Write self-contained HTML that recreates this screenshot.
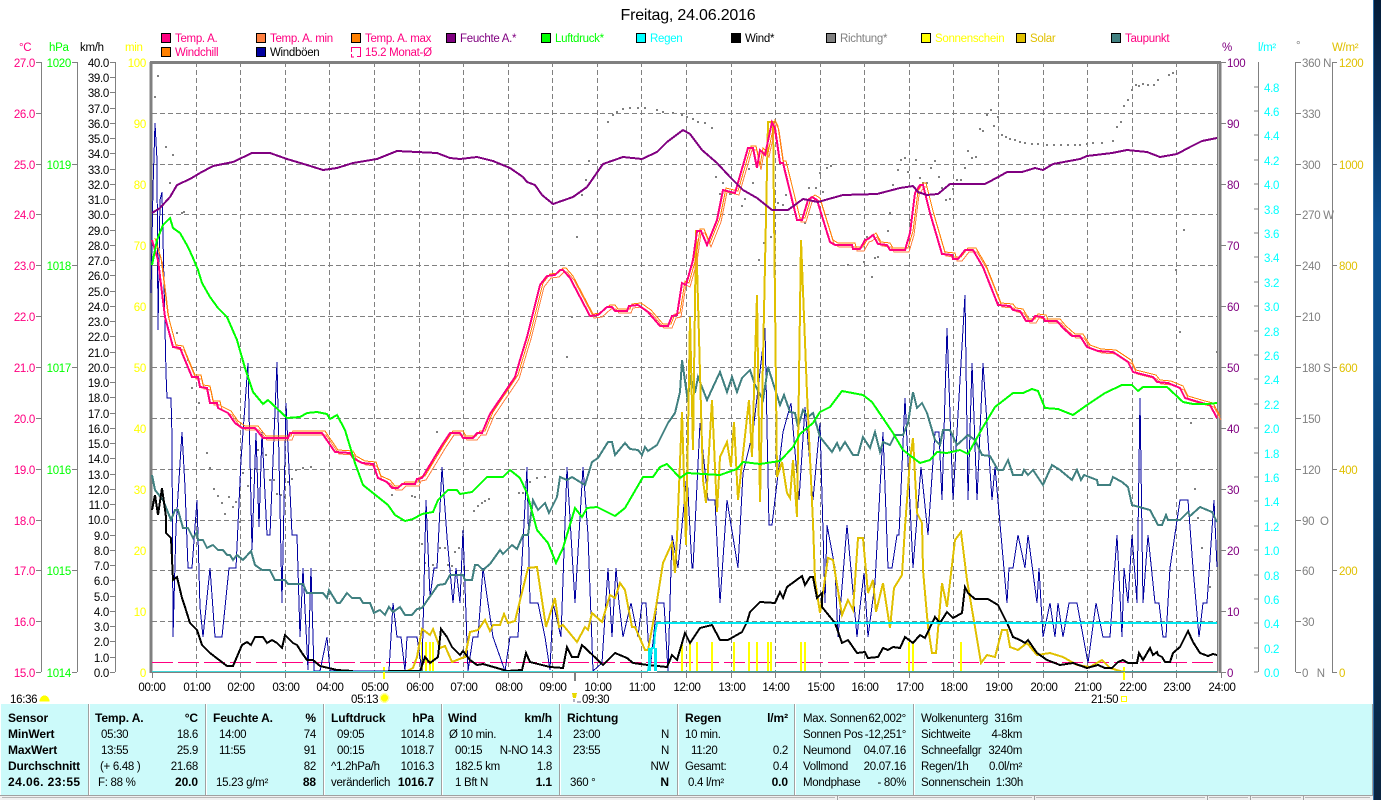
<!DOCTYPE html>
<html><head><meta charset="utf-8"><title>Freitag, 24.06.2016</title>
<style>
html,body{margin:0;padding:0;background:#fff;width:1381px;height:800px;overflow:hidden}
svg{display:block;position:absolute;left:0;top:0}
text{font-family:"Liberation Sans",sans-serif;font-size:11.5px;letter-spacing:-.3px}
.e{text-anchor:end}.m{text-anchor:middle}
.b{font-weight:bold;font-size:12px;letter-spacing:-.1px}
.c{fill:#ff0080}.g{fill:#00ff00}.y{fill:#ffff00}.p{fill:#800080}.t{fill:#00ffff}.k{fill:#808080}.s{fill:#e0c000}
.l{fill:none;stroke-linejoin:miter}
</style></head><body>
<svg width="1381" height="800" viewBox="0 0 1381 800" shape-rendering="crispEdges" xmlns="http://www.w3.org/2000/svg">
<defs>
<linearGradient id="bg" x1="0" y1="0" x2="0" y2="1"><stop offset="0" stop-color="#041c38"/><stop offset=".13" stop-color="#07305c"/><stop offset=".28" stop-color="#0a4f90"/><stop offset=".45" stop-color="#0a4c88"/><stop offset=".7" stop-color="#08365f"/><stop offset="1" stop-color="#0a2440"/></linearGradient>
<polyline id="temp" class="l" points="152,240 158,260 165,317 173,347 180,348 192,377 198,377 200,387 207,388 210,403 217,403 218,408 228,413 235,423 242,428 255,428 263,438 288,438 290,433 322,433 335,452 350,453 353,458 362,463 373,464 378,478 387,482 392,488 398,488 402,484 415,484 417,479 422,478 442,445 450,433 460,433 463,438 473,438 477,433 482,433 490,414 515,377 520,360 527,337 540,285 547,276 555,275 560,270 563,270 570,278 580,297 590,316 598,315 607,307 612,307 615,311 627,311 629,306 638,305 648,312 660,326 668,326 672,316 677,315 682,283 686,285 693,260 697,231 701,231 707,245 717,220 723,190 735,193 748,148 753,148 757,168 760,150 765,155 772,122 775,128 780,163 783,163 797,220 802,220 808,200 812,197 817,200 830,242 835,245 852,245 853,249 860,249 865,240 868,239 873,235 878,244 887,245 890,250 905,250 910,233 915,193 920,185 923,185 930,213 942,254 952,255 953,259 958,259 965,250 973,250 983,267 998,305 1010,306 1013,310 1020,311 1026,321 1032,321 1035,316 1043,317 1045,321 1057,321 1063,328 1072,336 1080,336 1087,347 1098,351 1113,352 1122,358 1128,362 1133,372 1153,377 1157,382 1168,383 1180,388 1185,398 1202,403 1210,405 1217,418"/>
</defs>
<rect x="1373" y="0" width="8" height="800" fill="url(#bg)"/>
<rect x="1373" y="0" width="1" height="800" fill="#2d6ea8"/>
<!-- grid -->
<path d="M196 62V672M240 62V672M285 62V672M329 62V672M374 62V672M419 62V672M463 62V672M508 62V672M552 62V672M597 62V672M641 62V672M686 62V672M731 62V672M775 62V672M820 62V672M864 62V672M909 62V672M953 62V672M998 62V672M1043 62V672M1087 62V672M1132 62V672M1176 62V672" stroke="#808080" stroke-width="1" stroke-dasharray="5 3" fill="none" transform="translate(.5 0)"/>
<path d="M152 113.500H1217M152 164.500H1217M152 214.500H1217M152 265.500H1217M152 316.500H1217M152 367.500H1217M152 418.500H1217M152 469.500H1217M152 520.500H1217M152 570.500H1217M152 621.500H1217" stroke="#808080" stroke-width="1" stroke-dasharray="5 3" fill="none"/>
<!-- frame -->
<path d="M150 62.500H1221M151 62V673M1220 62V673" stroke="#808080" stroke-width="3" fill="none"/>
<path d="M1217.500 63V672" stroke="#808080" stroke-width="1" fill="none"/>
<path d="M152 672.500H1218" stroke="#808080" stroke-width="1" fill="none"/>
<!-- axes -->
<path d="M41.500 62V672M77.500 62V672M115.500 62V672M1258.500 62V672M1295.500 62V672M1332.500 62V672" stroke="#808080" stroke-width="1" fill="none"/>
<path d="M36 62.500H41M36 113.500H41M36 164.500H41M36 214.500H41M36 265.500H41M36 316.500H41M36 367.500H41M36 418.500H41M36 469.500H41M36 520.500H41M36 570.500H41M36 621.500H41M36 672.500H41M72 62.500H77M72 164.500H77M72 265.500H77M72 367.500H77M72 469.500H77M72 570.500H77M72 672.500H77M110 62.500H115M110 77.500H115M110 92.500H115M110 108.500H115M110 123.500H115M110 138.500H115M110 153.500H115M110 169.500H115M110 184.500H115M110 199.500H115M110 214.500H115M110 230.500H115M110 245.500H115M110 260.500H115M110 275.500H115M110 291.500H115M110 306.500H115M110 321.500H115M110 336.500H115M110 352.500H115M110 367.500H115M110 382.500H115M110 397.500H115M110 413.500H115M110 428.500H115M110 443.500H115M110 458.500H115M110 474.500H115M110 489.500H115M110 504.500H115M110 519.500H115M110 535.500H115M110 550.500H115M110 565.500H115M110 580.500H115M110 596.500H115M110 611.500H115M110 626.500H115M110 641.500H115M110 657.500H115M110 672.500H115M1221 62.500H1226M1221 123.500H1226M1221 184.500H1226M1221 245.500H1226M1221 306.500H1226M1221 367.500H1226M1221 428.500H1226M1221 489.500H1226M1221 550.500H1226M1221 611.500H1226M1221 672.500H1226M1254 87H1258M1254 111H1258M1254 135H1258M1254 160H1258M1254 184H1258M1254 209H1258M1254 233H1258M1254 257H1258M1254 282H1258M1254 306H1258M1254 331H1258M1254 355H1258M1254 379H1258M1254 404H1258M1254 428H1258M1254 453H1258M1254 477H1258M1254 501H1258M1254 526H1258M1254 550H1258M1254 575H1258M1254 599H1258M1254 623H1258M1254 648H1258M1254 672H1258M1296 62.500H1301M1296 113.500H1301M1296 164.500H1301M1296 214.500H1301M1296 265.500H1301M1296 316.500H1301M1296 367.500H1301M1296 418.500H1301M1296 469.500H1301M1296 520.500H1301M1296 570.500H1301M1296 621.500H1301M1296 672.500H1301M1332 62.500H1337M1332 164.500H1337M1332 265.500H1337M1332 367.500H1337M1332 469.500H1337M1332 570.500H1337M1332 672.500H1337M152.500 672V678M196.500 672V678M240.500 672V678M285.500 672V678M329.500 672V678M374.500 672V678M419.500 672V678M463.500 672V678M508.500 672V678M552.500 672V678M597.500 672V678M641.500 672V678M686.500 672V678M731.500 672V678M775.500 672V678M820.500 672V678M864.500 672V678M909.500 672V678M953.500 672V678M998.500 672V678M1043.500 672V678M1087.500 672V678M1132.500 672V678M1176.500 672V678M1221.500 672V678" stroke="#808080" stroke-width="1" fill="none"/>
<!-- direction dots -->
<path stroke="#808080" stroke-width="2" fill="none" d="M157 76h2M154 97h2M165 147h2M172 155h2M169 183h2M183 212h2M181 213h2M161 263h2M176 333h2M187 360h2M191 388h2M198 403h2M206 453h2M209 468h2M213 489h2M217 496h2M221 503h2M224 514h2M228 497h2M232 507h2M235 502h2M239 522h2M242 473h2M247 486h2M250 478h2M254 469h2M257 450h2M261 453h2M265 455h2M269 480h2M273 480h2M276 494h2M280 495h2M284 497h2M287 482h2M291 479h2M295 470h2M302 468h2M310 467h2M391 495h2M411 496h2M414 497h2M436 432h2M421 544h2M424 563h2M432 565h2M439 548h2M444 548h2M447 565h2M451 566h2M454 552h2M458 548h2M462 532h2M473 511h2M477 506h2M481 503h2M484 501h2M488 499h2M518 493h2M522 493h2M526 482h2M529 482h2M536 478h2M544 477h2M566 357h2M571 317h2M576 237h2M581 195h2M585 180h2M588 161h2M607 122h2M612 115h2M616 112h2M622 109h2M629 108h2M637 108h2M644 108h2M656 110h2M662 112h2M672 113h2M681 115h2M686 117h2M692 119h2M697 122h2M704 123h2M711 128h2M715 177h2M722 183h2M719 194h2M729 194h2M744 199h2M741 206h2M752 183h2M748 169h2M763 243h2M758 260h2M770 237h2M777 203h2M782 205h2M785 195h2M804 223h2M808 188h2M815 188h2M822 192h2M819 173h2M826 168h2M830 166h2M847 265h2M863 262h2M874 258h2M877 257h2M866 237h2M887 231h2M889 213h2M892 185h2M897 170h2M900 160h2M904 158h2M907 172h2M915 160h2M909 220h2M917 193h2M919 178h2M922 183h2M926 183h2M930 168h2M934 161h2M938 177h2M941 188h2M945 200h2M949 199h2M952 189h2M956 180h2M960 180h2M964 168h2M967 151h2M971 158h2M975 157h2M979 129h2M982 131h2M986 115h2M990 110h2M993 126h2M997 117h2M1001 135h2M1005 137h2M1009 139h2M1014 140h2M1019 142h2M1024 143h2M1031 144h2M1037 144h2M1046 145h2M1053 145h2M1060 145h2M1067 145h2M1074 145h2M1079 145h2M1086 144h2M1092 143h2M1101 143h2M1112 141h2M1116 127h2M1120 122h2M1123 106h2M1127 100h2M1131 90h2M1135 85h2M1138 86h2M1142 84h2M1147 85h2M1153 85h2M1157 80h2M1168 75h2M1172 73h2M1183 230h2M871 277h2M1179 332h2M1190 423h2M1194 489h2M1197 518h2M1201 548h2M1209 587h2M1216 352h2M1175 270h2"/>
<!-- dashed monat -->
<path d="M152 662.500H1217" stroke="#ff0080" stroke-width="1" stroke-dasharray="21 5" fill="none"/>
<!-- sunshine bars -->
<path stroke="#ffff00" stroke-width="2" fill="none" d="M422 642V672M426 642V672M430 642V672M433 642V672M682 642V672M690 642V672M697 642V672M712 642V672M734 642V672M749 642V672M757 642V672M768 642V672M771 642V672M801 642V672M805 642V672M909 642V672M913 642V672M961 642V672"/>
<path stroke="#ffff00" stroke-width="2" fill="none" d="M384 667V679M1124 667V680"/>
<path stroke="#808080" stroke-width="2" fill="none" d="M575 672V681"/>
<!-- gusts -->
<polyline class="l" stroke="#0000a0" stroke-width="1" points="151,293 153,188 155,123 157,160 158,330 160,200 162,192 166,373 167,398 171,398 172,437 173,637 176,527 182,432 185,487 188,568 192,568 197,500 200,607 203,637 210,568 215,637 222,637 229,568 236,568 241,460 248,363 252,550 256,433 259,527 262,432 267,535 270,535 277,362 282,603 286,403 292,535 297,535 300,637 303,568 308,670 311,568 314,671 320,671 327,637 330,671 389,671 393,603 397,637 401,637 405,671 407,637 417,637 422,671 426,500 430,597 434,568 437,568 442,467 447,537 453,603 456,568 460,603 463,530 468,671 473,637 478,637 483,568 488,603 493,637 505,671 510,637 518,637 527,467 530,603 538,603 545,637 550,670 553,603 561,637 567,467 575,603 583,467 588,535 593,671 602,663 608,568 612,637 616,568 619,603 623,637 631,603 638,637 642,603 646,603 650,671 657,603 664,603 668,671 672,535 678,568 687,473 692,568 693,568 700,423 708,500 715,500 720,603 727,500 738,568 743,473 753,432 765,328 769,525 772,525 783,432 791,403 799,500 805,407 813,500 820,423 825,603 827,525 835,568 838,637 847,525 857,637 860,607 864,573 868,637 875,583 883,432 888,568 892,568 897,535 899,535 905,398 913,568 921,467 928,535 935,432 939,432 942,500 947,328 953,500 965,295 968,500 972,363 977,500 983,363 992,500 995,467 1007,603 1009,568 1013,568 1018,535 1025,568 1028,535 1037,603 1039,568 1043,637 1050,603 1055,637 1058,603 1063,637 1069,603 1077,603 1088,663 1096,603 1103,637 1110,637 1117,535 1122,637 1124,568 1128,603 1132,535 1137,603 1140,398 1143,603 1148,535 1155,603 1159,603 1163,637 1166,637 1170,568 1180,500 1188,500 1193,568 1199,637 1203,603 1207,603 1214,500 1217,567"/>
<!-- taupunkt -->
<polyline class="l" stroke="#408080" stroke-width="2" points="152,475 155,490 163,500 171,520 175,510 178,510 183,528 188,528 193,538 197,532 198,540 203,540 207,548 213,545 218,550 223,550 227,555 230,555 233,560 237,555 243,560 251,551 255,565 262,570 270,570 275,580 285,580 288,584 303,584 307,593 323,593 327,598 329,590 337,603 340,603 347,593 352,598 360,598 363,603 370,603 374,613 380,610 385,615 389,607 393,612 400,607 405,615 412,615 417,609 422,608 438,585 445,584 450,575 463,575 465,580 472,580 475,565 478,565 483,570 490,564 500,550 503,554 512,545 517,549 523,535 528,535 533,500 538,510 545,503 549,513 557,497 560,477 567,480 572,477 580,482 585,485 592,462 598,458 608,442 612,442 615,455 625,443 630,449 638,450 642,455 645,447 648,451 657,445 668,423 675,413 680,392 682,360 688,402 690,375 695,393 698,377 707,400 713,387 720,372 727,392 732,377 737,392 742,378 750,370 755,385 763,400 768,367 780,405 784,395 790,412 795,413 798,427 803,410 808,417 813,413 820,437 832,452 837,443 840,450 845,442 853,455 858,455 863,437 870,448 875,432 880,452 883,442 890,445 895,435 903,435 908,423 913,392 917,408 922,403 927,413 935,440 940,445 943,430 950,430 957,445 968,435 975,440 982,455 990,456 998,470 1003,470 1008,460 1013,475 1022,475 1024,470 1028,475 1033,470 1043,485 1052,465 1060,470 1072,480 1077,470 1081,480 1084,475 1097,480 1098,485 1110,485 1113,477 1122,482 1128,487 1132,505 1150,510 1158,525 1162,525 1166,515 1168,520 1180,520 1188,512 1190,516 1200,507 1212,512 1217,522"/>
<!-- solar -->
<polyline class="l" stroke="#e0c000" stroke-width="2" points="407,671 413,668 417,657 422,629 430,635 433,629 440,648 445,646 452,662 462,658 465,657 470,632 478,630 485,620 490,631 493,625 500,625 504,614 508,623 515,621 528,568 537,567 543,607 546,627 555,598 559,627 563,625 577,642 585,627 588,630 592,613 602,622 610,595 615,598 620,583 625,590 632,627 635,627 645,650 648,650 656,607 663,563 672,543 675,573 677,537 682,412 686,545 690,317 693,450 696,230 703,480 706,503 712,400 717,512 720,457 727,442 731,467 734,422 738,500 742,463 749,400 752,457 757,295 760,502 768,122 773,122 777,477 782,462 787,493 790,498 793,460 797,517 801,240 807,393 813,523 815,580 820,613 828,558 833,560 842,615 848,600 853,610 858,538 863,538 865,560 868,593 873,580 876,612 883,583 890,628 894,588 902,575 905,527 910,460 913,438 917,513 922,523 923,570 928,627 932,653 936,653 942,583 947,607 955,540 961,532 967,580 975,627 981,663 987,655 995,657 1002,630 1007,630 1010,647 1018,650 1027,643 1037,655 1050,653 1063,657 1077,665 1090,667 1102,660 1110,668 1120,671 1124,672"/>
<!-- temp lines -->
<use href="#temp" stroke="#ff8040" stroke-width="1" transform="translate(4 2)"/>
<use href="#temp" stroke="#ff8000" stroke-width="1" transform="translate(3 -2)"/>
<use href="#temp" stroke="#ff0080" stroke-width="2"/>
<!-- green, humidity -->
<polyline class="l" stroke="#00ff00" stroke-width="2" points="152,265 157,240 163,225 170,218 173,228 180,233 188,247 193,258 198,270 202,283 210,297 218,308 227,317 237,340 245,368 253,392 263,404 268,400 287,418 300,417 307,413 317,412 327,414 330,419 337,415 345,430 355,463 363,485 388,505 395,515 405,521 413,519 422,514 433,512 438,500 448,490 457,490 460,494 472,492 487,477 503,477 510,470 520,478 527,493 537,530 548,543 556,563 563,548 575,508 582,517 587,508 597,507 615,516 625,508 643,477 653,477 660,467 667,464 680,478 687,473 720,475 737,469 743,462 760,464 780,461 793,447 800,434 813,423 820,412 830,407 842,391 863,395 872,402 893,433 903,450 920,463 930,460 937,452 947,453 960,450 968,454 983,427 995,407 1013,393 1023,393 1032,389 1038,391 1045,408 1058,409 1073,415 1087,405 1105,393 1122,385 1132,385 1138,391 1143,387 1167,387 1183,402 1193,404 1207,404 1217,403"/>
<polyline class="l" stroke="#800080" stroke-width="2" points="152,213 160,208 170,197 177,185 190,179 200,173 213,166 233,162 252,153 270,153 287,159 307,165 323,170 337,168 353,163 377,159 397,151 437,153 450,158 460,159 477,157 493,161 510,168 523,177 527,182 535,185 542,195 553,204 573,197 587,187 603,164 623,157 642,159 657,152 667,142 683,130 690,134 702,150 717,163 730,177 743,190 757,198 772,210 788,210 803,199 818,202 843,195 877,194 900,188 913,186 918,192 927,195 938,194 950,184 985,184 1000,176 1007,172 1022,172 1035,168 1043,170 1053,164 1080,159 1087,156 1112,153 1127,150 1147,152 1160,157 1177,154 1190,147 1202,141 1217,138"/>
<!-- wind -->
<polyline class="l" stroke="#000" stroke-width="2" points="152,510 155,495 158,515 162,488 166,517 166,533 171,538 173,580 177,577 182,598 185,607 190,623 197,630 202,645 210,653 227,666 233,666 242,645 247,642 251,645 255,637 263,637 267,643 272,640 277,643 282,648 285,635 293,643 297,645 302,653 307,660 313,660 320,666 337,670 353,671"/>
<polyline class="l" stroke="#000" stroke-width="2" points="388,671 420,671 425,657 430,663 438,657 441,629 447,637 452,647 460,655 463,651 470,660 477,665 483,664 497,668 507,671 522,670 526,653 530,662 550,667 563,668 567,647 572,657 578,657 582,645 603,665 615,653 627,658 633,663 648,665 667,667 672,655 677,660 685,633 690,643 700,628 712,625 720,640 728,640 742,632 747,622 750,612 760,602 775,603 780,592 783,598 787,587 802,576 805,585 810,577 813,577 817,598 822,593 822,607 835,623 842,643 848,640 857,653 865,652 868,658 878,657 883,648 888,650 893,647 900,648 905,637 913,643 920,635 925,638 935,617 940,623 947,612 953,618 962,613 965,587 968,593 975,599 988,599 998,605 1008,625 1013,637 1020,640 1025,643 1028,640 1037,653 1047,660 1060,665 1073,663 1087,668 1098,665 1105,668 1112,668 1118,662 1123,660 1128,663 1137,663 1139,653 1143,660 1150,648 1153,655 1157,652 1158,655 1162,657 1165,662 1170,662 1173,653 1180,647 1188,631 1193,642 1200,653 1208,656 1213,654 1217,655"/>
<!-- rain -->
<path d="M152 671.500H648" stroke="#40d8d8" stroke-width="1" fill="none"/>
<polyline class="l" stroke="#00e8f0" stroke-width="2" points="648,671 652,648 654,648 655,633 657,623 1217,623"/>
<path d="M649.500 648V671M655.500 648V671" stroke="#00e8f0" stroke-width="3" fill="none"/>
<path d="M657 671.500H1217" stroke="#40a0a0" stroke-width="1" fill="none"/>
<!-- title -->
<text x="688" y="20" class="m" style="font-size:16px;letter-spacing:-.2px">Freitag, 24.06.2016</text>
<!-- legend -->
<g stroke="#000" stroke-width="1">
<rect x="161.500" y="33.500" width="9" height="9" fill="#ff0080"/><rect x="256.500" y="33.500" width="9" height="9" fill="#ff8040"/><rect x="351.500" y="33.500" width="9" height="9" fill="#ff8000"/><rect x="446.500" y="33.500" width="9" height="9" fill="#800080"/><rect x="541.500" y="33.500" width="9" height="9" fill="#00ff00"/><rect x="636.500" y="33.500" width="9" height="9" fill="#00ffff"/><rect x="731.500" y="33.500" width="9" height="9" fill="#000"/><rect x="826.500" y="33.500" width="9" height="9" fill="#808080"/><rect x="921.500" y="33.500" width="9" height="9" fill="#ffff00"/><rect x="1016.500" y="33.500" width="9" height="9" fill="#e0c000"/><rect x="1111.500" y="33.500" width="9" height="9" fill="#408080"/>
<rect x="161.500" y="47.500" width="9" height="9" fill="#ff8000"/><rect x="256.500" y="47.500" width="9" height="9" fill="#0000a0"/>
</g>
<path d="M351.500 52V47.500H360.500V56.500H357M351.500 54V57H354" stroke="#ff0080" fill="none"/>
<text x="175" y="42" class="c">Temp. A.</text><text x="270" y="42" class="c">Temp. A. min</text><text x="365" y="42" class="c">Temp. A. max</text><text x="460" y="42" class="p">Feuchte A.*</text><text x="555" y="42" class="g">Luftdruck*</text><text x="650" y="42" class="t">Regen</text><text x="745" y="42">Wind*</text><text x="840" y="42" class="k">Richtung*</text><text x="935" y="42" class="y">Sonnenschein</text><text x="1030" y="42" class="s">Solar</text><text x="1125" y="42" class="c">Taupunkt</text>
<text x="175" y="56" class="c">Windchill</text><text x="270" y="56">Windböen</text><text x="365" y="56" class="c">15.2 Monat-Ø</text>
<!-- axis titles -->
<text x="19" y="51" class="c">°C</text><text x="49" y="51" class="g">hPa</text><text x="80" y="51">km/h</text><text x="125" y="51" class="y">min</text><text x="1222" y="51" class="p">%</text><text x="1258" y="51" class="t">l/m²</text><text x="1296" y="49" class="k">°</text><text x="1332" y="51" class="s">W/m²</text>
<!-- C axis -->
<g class="c"><text class="e c" x="35" y="67">27.0</text><text class="e c" x="35" y="118">26.0</text><text class="e c" x="35" y="169">25.0</text><text class="e c" x="35" y="219">24.0</text><text class="e c" x="35" y="270">23.0</text><text class="e c" x="35" y="321">22.0</text><text class="e c" x="35" y="372">21.0</text><text class="e c" x="35" y="423">20.0</text><text class="e c" x="35" y="474">19.0</text><text class="e c" x="35" y="525">18.0</text><text class="e c" x="35" y="575">17.0</text><text class="e c" x="35" y="626">16.0</text><text class="e c" x="35" y="677">15.0</text></g>
<text class="e g" x="71" y="67">1020</text><text class="e g" x="71" y="169">1019</text><text class="e g" x="71" y="270">1018</text><text class="e g" x="71" y="372">1017</text><text class="e g" x="71" y="474">1016</text><text class="e g" x="71" y="575">1015</text><text class="e g" x="71" y="677">1014</text>
<text class="e" x="109" y="67">40.0</text><text class="e" x="109" y="82">39.0</text><text class="e" x="109" y="97">38.0</text><text class="e" x="109" y="113">37.0</text><text class="e" x="109" y="128">36.0</text><text class="e" x="109" y="143">35.0</text><text class="e" x="109" y="158">34.0</text><text class="e" x="109" y="174">33.0</text><text class="e" x="109" y="189">32.0</text><text class="e" x="109" y="204">31.0</text><text class="e" x="109" y="219">30.0</text><text class="e" x="109" y="235">29.0</text><text class="e" x="109" y="250">28.0</text><text class="e" x="109" y="265">27.0</text><text class="e" x="109" y="280">26.0</text><text class="e" x="109" y="296">25.0</text><text class="e" x="109" y="311">24.0</text><text class="e" x="109" y="326">23.0</text><text class="e" x="109" y="341">22.0</text><text class="e" x="109" y="357">21.0</text><text class="e" x="109" y="372">20.0</text><text class="e" x="109" y="387">19.0</text><text class="e" x="109" y="402">18.0</text><text class="e" x="109" y="418">17.0</text><text class="e" x="109" y="433">16.0</text><text class="e" x="109" y="448">15.0</text><text class="e" x="109" y="463">14.0</text><text class="e" x="109" y="479">13.0</text><text class="e" x="109" y="494">12.0</text><text class="e" x="109" y="509">11.0</text><text class="e" x="109" y="524">10.0</text><text class="e" x="109" y="540">9.0</text><text class="e" x="109" y="555">8.0</text><text class="e" x="109" y="570">7.0</text><text class="e" x="109" y="585">6.0</text><text class="e" x="109" y="601">5.0</text><text class="e" x="109" y="616">4.0</text><text class="e" x="109" y="631">3.0</text><text class="e" x="109" y="646">2.0</text><text class="e" x="109" y="662">1.0</text><text class="e" x="109" y="677">0.0</text>
<text class="e y" x="146" y="67">100</text><text class="e y" x="146" y="128">90</text><text class="e y" x="146" y="189">80</text><text class="e y" x="146" y="250">70</text><text class="e y" x="146" y="311">60</text><text class="e y" x="146" y="372">50</text><text class="e y" x="146" y="433">40</text><text class="e y" x="146" y="494">30</text><text class="e y" x="146" y="555">20</text><text class="e y" x="146" y="616">10</text><text class="e y" x="146" y="677">0</text>
<text class="p" x="1227" y="67">100</text><text class="p" x="1227" y="128">90</text><text class="p" x="1227" y="189">80</text><text class="p" x="1227" y="250">70</text><text class="p" x="1227" y="311">60</text><text class="p" x="1227" y="372">50</text><text class="p" x="1227" y="433">40</text><text class="p" x="1227" y="494">30</text><text class="p" x="1227" y="555">20</text><text class="p" x="1227" y="616">10</text><text class="p" x="1227" y="677">0</text>
<text class="t" x="1264" y="92">4.8</text><text class="t" x="1264" y="116">4.6</text><text class="t" x="1264" y="140">4.4</text><text class="t" x="1264" y="165">4.2</text><text class="t" x="1264" y="189">4.0</text><text class="t" x="1264" y="214">3.8</text><text class="t" x="1264" y="238">3.6</text><text class="t" x="1264" y="262">3.4</text><text class="t" x="1264" y="287">3.2</text><text class="t" x="1264" y="311">3.0</text><text class="t" x="1264" y="336">2.8</text><text class="t" x="1264" y="360">2.6</text><text class="t" x="1264" y="384">2.4</text><text class="t" x="1264" y="409">2.2</text><text class="t" x="1264" y="433">2.0</text><text class="t" x="1264" y="458">1.8</text><text class="t" x="1264" y="482">1.6</text><text class="t" x="1264" y="506">1.4</text><text class="t" x="1264" y="531">1.2</text><text class="t" x="1264" y="555">1.0</text><text class="t" x="1264" y="580">0.8</text><text class="t" x="1264" y="604">0.6</text><text class="t" x="1264" y="628">0.4</text><text class="t" x="1264" y="653">0.2</text><text class="t" x="1264" y="677">0.0</text>
<text class="k" x="1302" y="67">360 N</text><text class="k" x="1302" y="118">330</text><text class="k" x="1302" y="169">300</text><text class="k" x="1302" y="219">270 W</text><text class="k" x="1302" y="270">240</text><text class="k" x="1302" y="321">210</text><text class="k" x="1302" y="372">180 S</text><text class="k" x="1302" y="423">150</text><text class="k" x="1302" y="474">120</text><text class="k" x="1302" y="525">90 &nbsp;O</text><text class="k" x="1302" y="575">60</text><text class="k" x="1302" y="626">30</text><text class="k" x="1302" y="677">0 &nbsp;&nbsp;N</text>
<text class="s" x="1339" y="67">1200</text><text class="s" x="1339" y="169">1000</text><text class="s" x="1339" y="270">800</text><text class="s" x="1339" y="372">600</text><text class="s" x="1339" y="474">400</text><text class="s" x="1339" y="575">200</text><text class="s" x="1339" y="677">0</text>
<!-- x labels -->
<text class="m" x="152" y="691">00:00</text><text class="m" x="197" y="691">01:00</text><text class="m" x="241" y="691">02:00</text><text class="m" x="286" y="691">03:00</text><text class="m" x="330" y="691">04:00</text><text class="m" x="375" y="691">05:00</text><text class="m" x="420" y="691">06:00</text><text class="m" x="464" y="691">07:00</text><text class="m" x="509" y="691">08:00</text><text class="m" x="553" y="691">09:00</text><text class="m" x="598" y="691">10:00</text><text class="m" x="642" y="691">11:00</text><text class="m" x="687" y="691">12:00</text><text class="m" x="732" y="691">13:00</text><text class="m" x="776" y="691">14:00</text><text class="m" x="821" y="691">15:00</text><text class="m" x="865" y="691">16:00</text><text class="m" x="910" y="691">17:00</text><text class="m" x="954" y="691">18:00</text><text class="m" x="999" y="691">19:00</text><text class="m" x="1044" y="691">20:00</text><text class="m" x="1088" y="691">21:00</text><text class="m" x="1133" y="691">22:00</text><text class="m" x="1177" y="691">23:00</text><text class="m" x="1222" y="691">24:00</text>
<text x="10" y="703">16:36</text><path d="M40 701a4.500 5 0 0 1 9 0z" fill="#ffff00" stroke="#ffff00" stroke-width="1"/>
<text x="351" y="703">05:13</text><circle cx="384.500" cy="698" r="5" fill="#ffffa0"/><circle cx="384.500" cy="698" r="3.500" fill="#ffff00"/>
<text x="582" y="703">09:30</text><path d="M572 693h5l-1 5h-2l-1 0z" fill="#e8d800"/><path d="M574 699v3M577 702h4" stroke="#606080" fill="none"/>
<text x="1091" y="703">21:50</text><rect x="1121.500" y="696.500" width="5" height="5" fill="none" stroke="#ffff00"/>
<!-- panel -->
<rect x="1" y="704" width="1372" height="91" fill="#ccfafa"/>
<rect x="1372" y="704" width="1" height="91" fill="#a0a0a0"/>
<path d="M88.500 704V795M205.500 704V795M323.500 704V795M441.500 704V795M559.500 704V795M677.500 704V795M794.500 704V795M913.500 704V795" stroke="#a0a0a0" stroke-width="1" fill="none"/>
<path d="M89.500 704V795M206.500 704V795M324.500 704V795M442.500 704V795M560.500 704V795M678.500 704V795M795.500 704V795M914.500 704V795" stroke="#fff" stroke-width="1" fill="none"/>
<rect x="0" y="795" width="1373" height="5" fill="#f0f0f0"/>
<rect x="0" y="795" width="1373" height="1" fill="#a0a0a0"/>
<path d="M2 797.500H835M839 797.500H1032M1036 797.500H1205M1209 797.500H1248M1252 797.500H1301M1305 797.500H1370" stroke="#b8b8b8" fill="none"/>
<path d="M837.500 796V800M1034.500 796V800M1207.500 796V800M1250.500 796V800M1303.500 796V800" stroke="#a0a0a0" fill="none"/>
<g>
<text class="b" x="8" y="722">Sensor</text><text class="b" x="8" y="738">MinWert</text><text class="b" x="8" y="754">MaxWert</text><text class="b" x="8" y="770" textLength="72">Durchschnitt</text><text class="b" x="8" y="786" textLength="72">24.06. 23:55</text>
<text class="b" x="95" y="722">Temp. A.</text><text class="b e" x="198" y="722">°C</text>
<text x="101" y="738">05:30</text><text class="e" x="198" y="738">18.6</text><text x="101" y="754">13:55</text><text class="e" x="198" y="754">25.9</text><text x="100" y="770">(+ 6.48 )</text><text class="e" x="198" y="770">21.68</text><text x="98" y="786">F: 88 %</text><text class="b e" x="198" y="786">20.0</text>
<text class="b" x="213" y="722">Feuchte A.</text><text class="b e" x="316" y="722">%</text>
<text x="219" y="738">14:00</text><text class="e" x="316" y="738">74</text><text x="219" y="754">11:55</text><text class="e" x="316" y="754">91</text><text class="e" x="316" y="770">82</text><text x="216" y="786">15.23 g/m²</text><text class="b e" x="316" y="786">88</text>
<text class="b" x="331" y="722">Luftdruck</text><text class="b e" x="434" y="722">hPa</text>
<text x="337" y="738">09:05</text><text class="e" x="434" y="738">1014.8</text><text x="337" y="754">00:15</text><text class="e" x="434" y="754">1018.7</text><text x="331" y="770">^1.2hPa/h</text><text class="e" x="434" y="770">1016.3</text><text x="331" y="786">veränderlich</text><text class="b e" x="434" y="786">1016.7</text>
<text class="b" x="448" y="722">Wind</text><text class="b e" x="552" y="722">km/h</text>
<text x="449" y="738">Ø 10 min.</text><text class="e" x="552" y="738">1.4</text><text x="455" y="754">00:15</text><text class="e" x="552" y="754">N-NO 14.3</text><text x="455" y="770">182.5 km</text><text class="e" x="552" y="770">1.8</text><text x="455" y="786">1 Bft N</text><text class="b e" x="552" y="786">1.1</text>
<text class="b" x="567" y="722">Richtung</text>
<text x="573" y="738">23:00</text><text class="e" x="669" y="738">N</text><text x="573" y="754">23:55</text><text class="e" x="669" y="754">N</text><text class="e" x="669" y="770">NW</text><text x="570" y="786">360 °</text><text class="b e" x="669" y="786">N</text>
<text class="b" x="685" y="722">Regen</text><text class="b e" x="788" y="722">l/m²</text>
<text x="685" y="738">10 min.</text><text x="691" y="754">11:20</text><text class="e" x="788" y="754">0.2</text><text x="685" y="770">Gesamt:</text><text class="e" x="788" y="770">0.4</text><text x="688" y="786">0.4 l/m²</text><text class="b e" x="788" y="786">0.0</text>
<text x="803" y="722">Max. Sonnen</text><text class="e" x="906" y="722">62,002°</text><text x="803" y="738">Sonnen Pos</text><text class="e" x="906" y="738">-12,251°</text><text x="803" y="754">Neumond</text><text class="e" x="906" y="754">04.07.16</text><text x="803" y="770">Vollmond</text><text class="e" x="906" y="770">20.07.16</text><text x="803" y="786">Mondphase</text><text class="e" x="906" y="786">- 80%</text>
<text x="921" y="722">Wolkenunterg</text><text class="e" x="1022" y="722">316m</text><text x="921" y="738">Sichtweite</text><text class="e" x="1022" y="738">4-8km</text><text x="921" y="754">Schneefallgr</text><text class="e" x="1022" y="754">3240m</text><text x="921" y="770">Regen/1h</text><text class="e" x="1022" y="770">0.0l/m²</text><text x="921" y="786">Sonnenschein</text><text class="e" x="1023" y="786">1:30h</text>
</g>
</svg>
</body></html>
